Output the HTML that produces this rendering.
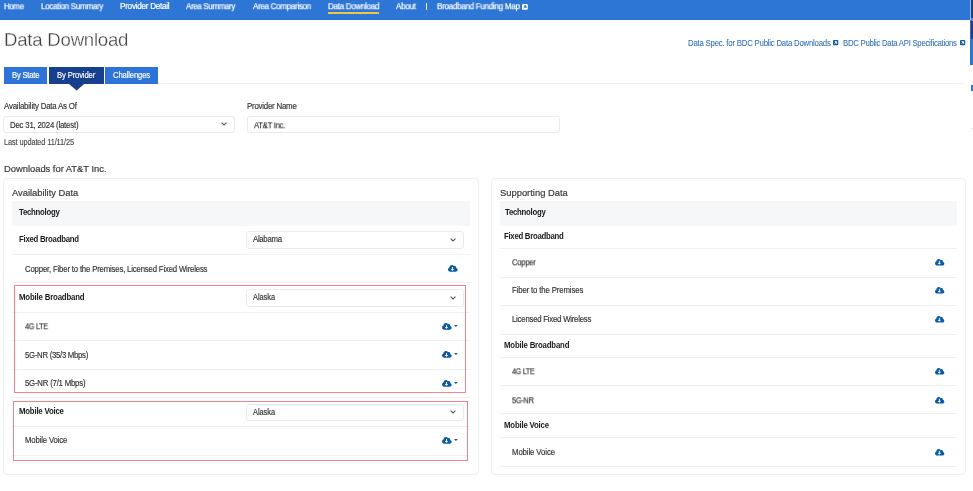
<!DOCTYPE html>
<html><head><meta charset="utf-8"><title>Data Download</title><style>
html,body{margin:0;padding:0;background:#fff;width:973px;height:491px;overflow:hidden;position:relative}
.t{position:absolute;white-space:nowrap;font-family:"Liberation Sans",sans-serif;will-change:transform}
.r{position:absolute}
svg{overflow:visible}
#wrap{position:absolute;left:0;top:0;width:973px;height:491px;overflow:hidden;background:#fff;}
</style></head><body><div id="wrap">
<div class="r" style="left:0px;top:0px;width:973px;height:20px;background:#2d76d6"></div>
<div class="r" style="left:0px;top:18px;width:973px;height:1px;background:#2a72d5"></div>
<div class="t" style="left:3.80px;top:3px;font-size:8.2px;line-height:8.2px;color:#fff;font-weight:normal;letter-spacing:-0.300px;transform-origin:0 6.0px;transform:scale(0.9573,1.1);-webkit-text-stroke:0.2px #fff">Home</div>
<div class="t" style="left:40.70px;top:3px;font-size:8.2px;line-height:8.2px;color:#fff;font-weight:normal;letter-spacing:-0.300px;transform-origin:0 6.0px;transform:scale(0.9752,1.1);-webkit-text-stroke:0.2px #fff">Location Summary</div>
<div class="t" style="left:119.90px;top:3px;font-size:8.2px;line-height:8.2px;color:#fff;font-weight:normal;letter-spacing:-0.286px;transform-origin:0 6.0px;transform:scale(1.0000,1.1);-webkit-text-stroke:0.2px #fff">Provider Detail</div>
<div class="t" style="left:186.30px;top:3px;font-size:8.2px;line-height:8.2px;color:#fff;font-weight:normal;letter-spacing:-0.300px;transform-origin:0 6.0px;transform:scale(0.9613,1.1);-webkit-text-stroke:0.2px #fff">Area Summary</div>
<div class="t" style="left:252.50px;top:3px;font-size:8.2px;line-height:8.2px;color:#fff;font-weight:normal;letter-spacing:-0.300px;transform-origin:0 6.0px;transform:scale(0.9766,1.1);-webkit-text-stroke:0.2px #fff">Area Comparison</div>
<div class="t" style="left:327.70px;top:3px;font-size:8.2px;line-height:8.2px;color:#fff;font-weight:normal;letter-spacing:-0.300px;transform-origin:0 6.0px;transform:scale(0.9847,1.1);-webkit-text-stroke:0.2px #fff">Data Download</div>
<div class="t" style="left:395.60px;top:3px;font-size:8.2px;line-height:8.2px;color:#fff;font-weight:normal;letter-spacing:-0.300px;transform-origin:0 6.0px;transform:scale(0.9760,1.1);-webkit-text-stroke:0.2px #fff">About</div>
<div class="t" style="left:437.00px;top:3px;font-size:8.2px;line-height:8.2px;color:#fff;font-weight:normal;letter-spacing:-0.300px;transform-origin:0 6.0px;transform:scale(0.9869,1.1);-webkit-text-stroke:0.2px #fff">Broadband Funding Map</div>
<div class="r" style="left:426px;top:3px;width:1px;height:7px;background:#e6eefa"></div>
<div class="r" style="left:328px;top:12px;width:51px;height:2px;background:#eec645"></div>
<svg viewBox="0 0 10 10" width="5.8" height="5.8" style="position:absolute;left:522.2px;top:3.6px"><rect x="0" y="0" width="10" height="10" rx="2" fill="#fff"/><path d="M3.6 3.2H7V6.6Z M3 7.2L5.6 4.6" stroke="#2d76d6" stroke-width="1.6" fill="#2d76d6"/></svg>
<div class="r" style="left:970px;top:0px;width:1px;height:20px;background:#9cbde9"></div>
<div class="r" style="left:971px;top:0px;width:2px;height:39px;background:#173f8e"></div>
<div class="r" style="left:971px;top:18px;width:2px;height:3px;background:#6f86b4"></div>
<div class="r" style="left:970px;top:20px;width:1px;height:19px;background:#4a67a6"></div>
<div class="r" style="left:970px;top:39px;width:3px;height:26px;background:#2d76d6"></div>
<div class="r" style="left:971px;top:85px;width:2px;height:6px;background:#2d76d6"></div>
<div class="r" style="left:970px;top:128px;width:3px;height:1px;background:#eeeeee"></div>
<div class="t" style="left:4.00px;top:31px;font-size:18.6px;line-height:18.6px;color:#3e3e3e;font-weight:normal;letter-spacing:-0.225px;-webkit-text-stroke:0.3px #fff">Data Download</div>
<div class="t" style="left:688.20px;top:40px;font-size:7.8px;line-height:7.8px;color:#2f6fb3;font-weight:normal;letter-spacing:-0.215px;transform-origin:0 6.0px;transform:scale(1.0000,1.1);-webkit-text-stroke:0.05px #2f6fb3;">Data Spec. for BDC Public Data Downloads</div>
<svg viewBox="0 0 10 10" width="5.3" height="5.3" style="position:absolute;left:833.3px;top:40.3px"><rect x="0" y="0" width="10" height="10" rx="2" fill="#0f5aa0"/><path d="M3.6 3.2H7V6.6Z M3 7.2L5.6 4.6" stroke="#fff" stroke-width="1.6" fill="#fff"/></svg>
<div class="t" style="left:843.20px;top:40px;font-size:7.8px;line-height:7.8px;color:#2f6fb3;font-weight:normal;letter-spacing:-0.276px;transform-origin:0 6.0px;transform:scale(1.0000,1.1);-webkit-text-stroke:0.05px #2f6fb3;">BDC Public Data API Specifications</div>
<svg viewBox="0 0 10 10" width="5.3" height="5.3" style="position:absolute;left:959.9px;top:40.3px"><rect x="0" y="0" width="10" height="10" rx="2" fill="#0f5aa0"/><path d="M3.6 3.2H7V6.6Z M3 7.2L5.6 4.6" stroke="#fff" stroke-width="1.6" fill="#fff"/></svg>
<div class="r" style="left:158px;top:83px;width:807px;height:1px;background:#eeeff1"></div>
<div class="r" style="left:4px;top:67px;width:43px;height:17px;background:#2e74d8"></div>
<div class="r" style="left:49px;top:67px;width:55px;height:17px;background:#163f8f"></div>
<div class="r" style="left:105px;top:67px;width:53px;height:17px;background:#2e74d8"></div>
<svg width="16" height="8" style="position:absolute;left:69px;top:84px"><path d="M0 0H15.2L7.6 6.6Z" fill="#163f8f"/></svg>
<div class="t" style="left:11.90px;top:72px;font-size:7.7px;line-height:7.7px;color:#fff;font-weight:normal;letter-spacing:-0.229px;transform-origin:0 6.0px;transform:scale(1.0000,1.1);-webkit-text-stroke:0.15px #fff">By State</div>
<div class="t" style="left:56.80px;top:72px;font-size:7.7px;line-height:7.7px;color:#fff;font-weight:normal;letter-spacing:-0.150px;transform-origin:0 6.0px;transform:scale(1.0000,1.1);-webkit-text-stroke:0.15px #fff">By Provider</div>
<div class="t" style="left:113.30px;top:72px;font-size:7.7px;line-height:7.7px;color:#fff;font-weight:normal;letter-spacing:-0.144px;transform-origin:0 6.0px;transform:scale(1.0000,1.1);-webkit-text-stroke:0.15px #fff">Challenges</div>
<div class="t" style="left:3.60px;top:103px;font-size:7.9px;line-height:7.9px;color:#333333;font-weight:normal;letter-spacing:-0.205px;transform-origin:0 6.0px;transform:scale(1.0000,1.1);-webkit-text-stroke:0.15px #333333;">Availability Data As Of</div>
<div class="t" style="left:247.40px;top:103px;font-size:7.9px;line-height:7.9px;color:#333333;font-weight:normal;letter-spacing:-0.233px;transform-origin:0 6.0px;transform:scale(1.0000,1.1);-webkit-text-stroke:0.15px #333333;">Provider Name</div>
<div class="r" style="left:3px;top:116px;width:232px;height:17px;border:1px solid #e9ebee;border-radius:3px;background:#fff;box-sizing:border-box"></div>
<svg width="7" height="4" style="position:absolute;left:221.3px;top:122.0px"><path d="M0.6 0.7 L3.05 3.0 L5.5 0.7" fill="none" stroke="#555555" stroke-width="1.05"/></svg>
<div class="t" style="left:10.30px;top:122px;font-size:7.8px;line-height:7.8px;color:#333333;font-weight:normal;letter-spacing:-0.195px;transform-origin:0 6.0px;transform:scale(1.0000,1.1);-webkit-text-stroke:0.15px #333333;">Dec 31, 2024 (latest)</div>
<div class="r" style="left:247px;top:116px;width:313px;height:17px;border:1px solid #e9ebee;border-radius:3px;background:#fff;box-sizing:border-box"></div>
<div class="t" style="left:253.90px;top:122px;font-size:7.8px;line-height:7.8px;color:#333333;font-weight:normal;letter-spacing:-0.300px;transform-origin:0 6.0px;transform:scale(0.9905,1.1);-webkit-text-stroke:0.15px #333333;">AT&amp;T Inc.</div>
<div class="t" style="left:3.60px;top:139px;font-size:7.4px;line-height:7.4px;color:#444444;font-weight:normal;letter-spacing:-0.120px;transform-origin:0 6.0px;transform:scale(1.0000,1.1);-webkit-text-stroke:0.1px #444444;">Last updated 11/11/25</div>
<div class="t" style="left:4.30px;top:164px;font-size:9.4px;line-height:9.4px;color:#3a3a3a;font-weight:normal;letter-spacing:-0.014px;-webkit-text-stroke:0.2px #3a3a3a;">Downloads for AT&amp;T Inc.</div>
<div class="r" style="left:3px;top:178px;width:476px;height:297px;border:1px solid #eef0f2;border-radius:4px;background:#fff;box-sizing:border-box"></div>
<div class="t" style="left:12.30px;top:188px;font-size:9.4px;line-height:9.4px;color:#3a3a3a;font-weight:normal;letter-spacing:-0.019px;-webkit-text-stroke:0.2px #3a3a3a;">Availability Data</div>
<div class="r" style="left:12px;top:201px;width:458px;height:25px;background:#f6f7f9"></div>
<div class="t" style="left:18.50px;top:209px;font-size:7.8px;line-height:7.8px;color:#1a1a1a;font-weight:bold;letter-spacing:-0.267px;transform-origin:0 6.0px;transform:scale(1.0000,1.1);">Technology</div>
<div class="t" style="left:18.60px;top:236px;font-size:7.8px;line-height:7.8px;color:#1a1a1a;font-weight:bold;letter-spacing:-0.264px;transform-origin:0 6.0px;transform:scale(1.0000,1.1);">Fixed Broadband</div>
<div class="r" style="left:246px;top:231px;width:218px;height:18px;border:1px solid #e9ebee;border-radius:3px;background:#fff;box-sizing:border-box"></div>
<svg width="7" height="4" style="position:absolute;left:450.3px;top:237.5px"><path d="M0.6 0.7 L3.05 3.0 L5.5 0.7" fill="none" stroke="#555555" stroke-width="1.05"/></svg>
<div class="t" style="left:253.40px;top:236px;font-size:7.8px;line-height:7.8px;color:#333333;font-weight:normal;letter-spacing:-0.300px;transform-origin:0 6.0px;transform:scale(1.0000,1.1);-webkit-text-stroke:0.15px #333333;">Alabama</div>
<div class="r" style="left:12px;top:254px;width:458px;height:1px;background:#eef0f2"></div>
<div class="t" style="left:25.10px;top:266px;font-size:7.8px;line-height:7.8px;color:#333333;font-weight:normal;letter-spacing:-0.187px;transform-origin:0 6.0px;transform:scale(1.0000,1.1);-webkit-text-stroke:0.15px #333333;">Copper, Fiber to the Premises, Licensed Fixed Wireless</div>
<svg viewBox="0 32 640 448" width="9.7" height="6.8" style="position:absolute;left:448.2px;top:265.2px"><path fill="#0c5aa6" d="M537.6 226.6c4.1-10.7 6.4-22.4 6.4-34.6 0-53-43-96-96-96-19.7 0-38.1 6-53.3 16.2C367 64.2 315.3 32 256 32c-88.4 0-160 71.6-160 160 0 2.7.1 5.4.2 8.1C40.2 219.8 0 273.2 0 336c0 79.5 64.5 144 144 144h368c70.7 0 128-57.3 128-128 0-61.9-44-113.6-102.4-125.4z"/><path fill="#fff" d="M397.7 319.6L305 412.3c-4.7 4.7-12.3 4.7-17 0l-92.7-92.7c-7.6-7.6-2.2-20.5 8.5-20.5H264V176c0-8.8 7.2-16 16-16h32c8.8 0 16 7.2 16 16v122.6h61.2c10.7 0 16.1 12.9 8.5 20.5z"/></svg>
<div class="r" style="left:12px;top:282px;width:458px;height:1px;background:#eef0f2"></div>
<div class="t" style="left:18.60px;top:294px;font-size:7.8px;line-height:7.8px;color:#1a1a1a;font-weight:bold;letter-spacing:-0.160px;transform-origin:0 6.0px;transform:scale(1.0000,1.1);">Mobile Broadband</div>
<div class="r" style="left:246px;top:289px;width:218px;height:18px;border:1px solid #e9ebee;border-radius:3px;background:#fff;box-sizing:border-box"></div>
<svg width="7" height="4" style="position:absolute;left:450.3px;top:295.5px"><path d="M0.6 0.7 L3.05 3.0 L5.5 0.7" fill="none" stroke="#555555" stroke-width="1.05"/></svg>
<div class="t" style="left:253.10px;top:294px;font-size:7.4px;line-height:7.4px;color:#333333;font-weight:normal;letter-spacing:-0.030px;transform-origin:0 6.0px;transform:scale(1.0000,1.1);-webkit-text-stroke:0.15px #333333;">Alaska</div>
<div class="r" style="left:12px;top:312px;width:458px;height:1px;background:#eef0f2"></div>
<div class="t" style="left:24.70px;top:323px;font-size:7.8px;line-height:7.8px;color:#333333;font-weight:normal;letter-spacing:-0.300px;transform-origin:0 6.0px;transform:scale(0.9347,1.1);-webkit-text-stroke:0.15px #333333;">4G LTE</div>
<svg viewBox="0 32 640 448" width="9.7" height="6.8" style="position:absolute;left:442.4px;top:323.0px"><path fill="#0c5aa6" d="M537.6 226.6c4.1-10.7 6.4-22.4 6.4-34.6 0-53-43-96-96-96-19.7 0-38.1 6-53.3 16.2C367 64.2 315.3 32 256 32c-88.4 0-160 71.6-160 160 0 2.7.1 5.4.2 8.1C40.2 219.8 0 273.2 0 336c0 79.5 64.5 144 144 144h368c70.7 0 128-57.3 128-128 0-61.9-44-113.6-102.4-125.4z"/><path fill="#fff" d="M397.7 319.6L305 412.3c-4.7 4.7-12.3 4.7-17 0l-92.7-92.7c-7.6-7.6-2.2-20.5 8.5-20.5H264V176c0-8.8 7.2-16 16-16h32c8.8 0 16 7.2 16 16v122.6h61.2c10.7 0 16.1 12.9 8.5 20.5z"/></svg>
<svg width="4" height="3" style="position:absolute;left:453.6px;top:325.0px"><path d="M0 0H3.8L1.9 2Z" fill="#0c5aa6"/></svg>
<div class="r" style="left:12px;top:340px;width:458px;height:1px;background:#eef0f2"></div>
<div class="t" style="left:24.70px;top:352px;font-size:7.8px;line-height:7.8px;color:#333333;font-weight:normal;letter-spacing:-0.294px;transform-origin:0 6.0px;transform:scale(1.0000,1.1);-webkit-text-stroke:0.15px #333333;">5G-NR (35/3 Mbps)</div>
<svg viewBox="0 32 640 448" width="9.7" height="6.8" style="position:absolute;left:442.4px;top:351.3px"><path fill="#0c5aa6" d="M537.6 226.6c4.1-10.7 6.4-22.4 6.4-34.6 0-53-43-96-96-96-19.7 0-38.1 6-53.3 16.2C367 64.2 315.3 32 256 32c-88.4 0-160 71.6-160 160 0 2.7.1 5.4.2 8.1C40.2 219.8 0 273.2 0 336c0 79.5 64.5 144 144 144h368c70.7 0 128-57.3 128-128 0-61.9-44-113.6-102.4-125.4z"/><path fill="#fff" d="M397.7 319.6L305 412.3c-4.7 4.7-12.3 4.7-17 0l-92.7-92.7c-7.6-7.6-2.2-20.5 8.5-20.5H264V176c0-8.8 7.2-16 16-16h32c8.8 0 16 7.2 16 16v122.6h61.2c10.7 0 16.1 12.9 8.5 20.5z"/></svg>
<svg width="4" height="3" style="position:absolute;left:453.6px;top:353.3px"><path d="M0 0H3.8L1.9 2Z" fill="#0c5aa6"/></svg>
<div class="r" style="left:12px;top:369px;width:458px;height:1px;background:#eef0f2"></div>
<div class="t" style="left:24.70px;top:380px;font-size:7.8px;line-height:7.8px;color:#333333;font-weight:normal;letter-spacing:-0.213px;transform-origin:0 6.0px;transform:scale(1.0000,1.1);-webkit-text-stroke:0.15px #333333;">5G-NR (7/1 Mbps)</div>
<svg viewBox="0 32 640 448" width="9.7" height="6.8" style="position:absolute;left:442.4px;top:380.0px"><path fill="#0c5aa6" d="M537.6 226.6c4.1-10.7 6.4-22.4 6.4-34.6 0-53-43-96-96-96-19.7 0-38.1 6-53.3 16.2C367 64.2 315.3 32 256 32c-88.4 0-160 71.6-160 160 0 2.7.1 5.4.2 8.1C40.2 219.8 0 273.2 0 336c0 79.5 64.5 144 144 144h368c70.7 0 128-57.3 128-128 0-61.9-44-113.6-102.4-125.4z"/><path fill="#fff" d="M397.7 319.6L305 412.3c-4.7 4.7-12.3 4.7-17 0l-92.7-92.7c-7.6-7.6-2.2-20.5 8.5-20.5H264V176c0-8.8 7.2-16 16-16h32c8.8 0 16 7.2 16 16v122.6h61.2c10.7 0 16.1 12.9 8.5 20.5z"/></svg>
<svg width="4" height="3" style="position:absolute;left:453.6px;top:382.0px"><path d="M0 0H3.8L1.9 2Z" fill="#0c5aa6"/></svg>
<div class="r" style="left:12px;top:397px;width:458px;height:1px;background:#eef0f2"></div>
<div class="t" style="left:18.60px;top:408px;font-size:7.8px;line-height:7.8px;color:#1a1a1a;font-weight:bold;letter-spacing:-0.200px;transform-origin:0 6.0px;transform:scale(1.0000,1.1);">Mobile Voice</div>
<div class="r" style="left:246px;top:404px;width:218px;height:17px;border:1px solid #e9ebee;border-radius:3px;background:#fff;box-sizing:border-box"></div>
<svg width="7" height="4" style="position:absolute;left:450.3px;top:410.0px"><path d="M0.6 0.7 L3.05 3.0 L5.5 0.7" fill="none" stroke="#555555" stroke-width="1.05"/></svg>
<div class="t" style="left:253.10px;top:409px;font-size:7.4px;line-height:7.4px;color:#333333;font-weight:normal;letter-spacing:-0.030px;transform-origin:0 6.0px;transform:scale(1.0000,1.1);-webkit-text-stroke:0.15px #333333;">Alaska</div>
<div class="r" style="left:12px;top:426px;width:458px;height:1px;background:#eef0f2"></div>
<div class="t" style="left:25.10px;top:437px;font-size:7.8px;line-height:7.8px;color:#333333;font-weight:normal;letter-spacing:-0.173px;transform-origin:0 6.0px;transform:scale(1.0000,1.1);-webkit-text-stroke:0.15px #333333;">Mobile Voice</div>
<svg viewBox="0 32 640 448" width="9.7" height="6.8" style="position:absolute;left:442.4px;top:436.6px"><path fill="#0c5aa6" d="M537.6 226.6c4.1-10.7 6.4-22.4 6.4-34.6 0-53-43-96-96-96-19.7 0-38.1 6-53.3 16.2C367 64.2 315.3 32 256 32c-88.4 0-160 71.6-160 160 0 2.7.1 5.4.2 8.1C40.2 219.8 0 273.2 0 336c0 79.5 64.5 144 144 144h368c70.7 0 128-57.3 128-128 0-61.9-44-113.6-102.4-125.4z"/><path fill="#fff" d="M397.7 319.6L305 412.3c-4.7 4.7-12.3 4.7-17 0l-92.7-92.7c-7.6-7.6-2.2-20.5 8.5-20.5H264V176c0-8.8 7.2-16 16-16h32c8.8 0 16 7.2 16 16v122.6h61.2c10.7 0 16.1 12.9 8.5 20.5z"/></svg>
<svg width="4" height="3" style="position:absolute;left:453.6px;top:438.6px"><path d="M0 0H3.8L1.9 2Z" fill="#0c5aa6"/></svg>
<div class="r" style="left:12px;top:455px;width:458px;height:1px;background:#eef0f2"></div>
<div class="r" style="left:14px;top:285px;width:452px;height:108px;border:1px solid #f3838a;box-sizing:border-box"></div>
<div class="r" style="left:13px;top:401px;width:455px;height:60px;border:1px solid #f3838a;box-sizing:border-box"></div>
<div class="r" style="left:491px;top:178px;width:475px;height:297px;border:1px solid #eef0f2;border-radius:4px;background:#fff;box-sizing:border-box"></div>
<div class="t" style="left:499.80px;top:188px;font-size:9.4px;line-height:9.4px;color:#3a3a3a;font-weight:normal;letter-spacing:-0.000px;-webkit-text-stroke:0.2px #3a3a3a;">Supporting Data</div>
<div class="r" style="left:500px;top:201px;width:457px;height:25px;background:#f6f7f9"></div>
<div class="t" style="left:505.20px;top:209px;font-size:7.8px;line-height:7.8px;color:#1a1a1a;font-weight:bold;letter-spacing:-0.256px;transform-origin:0 6.0px;transform:scale(1.0000,1.1);">Technology</div>
<div class="t" style="left:503.60px;top:233px;font-size:7.8px;line-height:7.8px;color:#1a1a1a;font-weight:bold;letter-spacing:-0.286px;transform-origin:0 6.0px;transform:scale(1.0000,1.1);">Fixed Broadband</div>
<div class="r" style="left:500px;top:248px;width:457px;height:1px;background:#eef0f2"></div>
<div class="t" style="left:511.60px;top:259px;font-size:7.8px;line-height:7.8px;color:#333333;font-weight:normal;letter-spacing:-0.300px;transform-origin:0 6.0px;transform:scale(0.9837,1.1);-webkit-text-stroke:0.15px #333333;">Copper</div>
<svg viewBox="0 32 640 448" width="9.3" height="6.5" style="position:absolute;left:935.4px;top:259.4px"><path fill="#0c5aa6" d="M537.6 226.6c4.1-10.7 6.4-22.4 6.4-34.6 0-53-43-96-96-96-19.7 0-38.1 6-53.3 16.2C367 64.2 315.3 32 256 32c-88.4 0-160 71.6-160 160 0 2.7.1 5.4.2 8.1C40.2 219.8 0 273.2 0 336c0 79.5 64.5 144 144 144h368c70.7 0 128-57.3 128-128 0-61.9-44-113.6-102.4-125.4z"/><path fill="#fff" d="M397.7 319.6L305 412.3c-4.7 4.7-12.3 4.7-17 0l-92.7-92.7c-7.6-7.6-2.2-20.5 8.5-20.5H264V176c0-8.8 7.2-16 16-16h32c8.8 0 16 7.2 16 16v122.6h61.2c10.7 0 16.1 12.9 8.5 20.5z"/></svg>
<div class="r" style="left:500px;top:277px;width:457px;height:1px;background:#eef0f2"></div>
<div class="t" style="left:511.60px;top:287px;font-size:7.8px;line-height:7.8px;color:#333333;font-weight:normal;letter-spacing:-0.140px;transform-origin:0 6.0px;transform:scale(1.0000,1.1);-webkit-text-stroke:0.15px #333333;">Fiber to the Premises</div>
<svg viewBox="0 32 640 448" width="9.3" height="6.5" style="position:absolute;left:935.4px;top:287.2px"><path fill="#0c5aa6" d="M537.6 226.6c4.1-10.7 6.4-22.4 6.4-34.6 0-53-43-96-96-96-19.7 0-38.1 6-53.3 16.2C367 64.2 315.3 32 256 32c-88.4 0-160 71.6-160 160 0 2.7.1 5.4.2 8.1C40.2 219.8 0 273.2 0 336c0 79.5 64.5 144 144 144h368c70.7 0 128-57.3 128-128 0-61.9-44-113.6-102.4-125.4z"/><path fill="#fff" d="M397.7 319.6L305 412.3c-4.7 4.7-12.3 4.7-17 0l-92.7-92.7c-7.6-7.6-2.2-20.5 8.5-20.5H264V176c0-8.8 7.2-16 16-16h32c8.8 0 16 7.2 16 16v122.6h61.2c10.7 0 16.1 12.9 8.5 20.5z"/></svg>
<div class="r" style="left:500px;top:305px;width:457px;height:1px;background:#eef0f2"></div>
<div class="t" style="left:511.80px;top:316px;font-size:7.8px;line-height:7.8px;color:#333333;font-weight:normal;letter-spacing:-0.232px;transform-origin:0 6.0px;transform:scale(1.0000,1.1);-webkit-text-stroke:0.15px #333333;">Licensed Fixed Wireless</div>
<svg viewBox="0 32 640 448" width="9.3" height="6.5" style="position:absolute;left:935.4px;top:316.2px"><path fill="#0c5aa6" d="M537.6 226.6c4.1-10.7 6.4-22.4 6.4-34.6 0-53-43-96-96-96-19.7 0-38.1 6-53.3 16.2C367 64.2 315.3 32 256 32c-88.4 0-160 71.6-160 160 0 2.7.1 5.4.2 8.1C40.2 219.8 0 273.2 0 336c0 79.5 64.5 144 144 144h368c70.7 0 128-57.3 128-128 0-61.9-44-113.6-102.4-125.4z"/><path fill="#fff" d="M397.7 319.6L305 412.3c-4.7 4.7-12.3 4.7-17 0l-92.7-92.7c-7.6-7.6-2.2-20.5 8.5-20.5H264V176c0-8.8 7.2-16 16-16h32c8.8 0 16 7.2 16 16v122.6h61.2c10.7 0 16.1 12.9 8.5 20.5z"/></svg>
<div class="r" style="left:500px;top:334px;width:457px;height:1px;background:#eef0f2"></div>
<div class="t" style="left:503.90px;top:342px;font-size:7.8px;line-height:7.8px;color:#1a1a1a;font-weight:bold;letter-spacing:-0.173px;transform-origin:0 6.0px;transform:scale(1.0000,1.1);">Mobile Broadband</div>
<div class="r" style="left:500px;top:357px;width:457px;height:1px;background:#eef0f2"></div>
<div class="t" style="left:512.00px;top:368px;font-size:7.8px;line-height:7.8px;color:#333333;font-weight:normal;letter-spacing:-0.300px;transform-origin:0 6.0px;transform:scale(0.9143,1.1);-webkit-text-stroke:0.15px #333333;">4G LTE</div>
<svg viewBox="0 32 640 448" width="9.3" height="6.5" style="position:absolute;left:935.4px;top:368.0px"><path fill="#0c5aa6" d="M537.6 226.6c4.1-10.7 6.4-22.4 6.4-34.6 0-53-43-96-96-96-19.7 0-38.1 6-53.3 16.2C367 64.2 315.3 32 256 32c-88.4 0-160 71.6-160 160 0 2.7.1 5.4.2 8.1C40.2 219.8 0 273.2 0 336c0 79.5 64.5 144 144 144h368c70.7 0 128-57.3 128-128 0-61.9-44-113.6-102.4-125.4z"/><path fill="#fff" d="M397.7 319.6L305 412.3c-4.7 4.7-12.3 4.7-17 0l-92.7-92.7c-7.6-7.6-2.2-20.5 8.5-20.5H264V176c0-8.8 7.2-16 16-16h32c8.8 0 16 7.2 16 16v122.6h61.2c10.7 0 16.1 12.9 8.5 20.5z"/></svg>
<div class="r" style="left:500px;top:385px;width:457px;height:1px;background:#eef0f2"></div>
<div class="t" style="left:512.00px;top:397px;font-size:7.8px;line-height:7.8px;color:#333333;font-weight:normal;letter-spacing:-0.300px;transform-origin:0 6.0px;transform:scale(0.9518,1.1);-webkit-text-stroke:0.15px #333333;">5G-NR</div>
<svg viewBox="0 32 640 448" width="9.3" height="6.5" style="position:absolute;left:935.4px;top:397.0px"><path fill="#0c5aa6" d="M537.6 226.6c4.1-10.7 6.4-22.4 6.4-34.6 0-53-43-96-96-96-19.7 0-38.1 6-53.3 16.2C367 64.2 315.3 32 256 32c-88.4 0-160 71.6-160 160 0 2.7.1 5.4.2 8.1C40.2 219.8 0 273.2 0 336c0 79.5 64.5 144 144 144h368c70.7 0 128-57.3 128-128 0-61.9-44-113.6-102.4-125.4z"/><path fill="#fff" d="M397.7 319.6L305 412.3c-4.7 4.7-12.3 4.7-17 0l-92.7-92.7c-7.6-7.6-2.2-20.5 8.5-20.5H264V176c0-8.8 7.2-16 16-16h32c8.8 0 16 7.2 16 16v122.6h61.2c10.7 0 16.1 12.9 8.5 20.5z"/></svg>
<div class="r" style="left:500px;top:413px;width:457px;height:1px;background:#eef0f2"></div>
<div class="t" style="left:503.90px;top:422px;font-size:7.8px;line-height:7.8px;color:#1a1a1a;font-weight:bold;letter-spacing:-0.182px;transform-origin:0 6.0px;transform:scale(1.0000,1.1);">Mobile Voice</div>
<div class="r" style="left:500px;top:437px;width:457px;height:1px;background:#eef0f2"></div>
<div class="t" style="left:512.00px;top:449px;font-size:7.8px;line-height:7.8px;color:#333333;font-weight:normal;letter-spacing:-0.109px;transform-origin:0 6.0px;transform:scale(1.0000,1.1);-webkit-text-stroke:0.15px #333333;">Mobile Voice</div>
<svg viewBox="0 32 640 448" width="9.3" height="6.5" style="position:absolute;left:935.4px;top:449.0px"><path fill="#0c5aa6" d="M537.6 226.6c4.1-10.7 6.4-22.4 6.4-34.6 0-53-43-96-96-96-19.7 0-38.1 6-53.3 16.2C367 64.2 315.3 32 256 32c-88.4 0-160 71.6-160 160 0 2.7.1 5.4.2 8.1C40.2 219.8 0 273.2 0 336c0 79.5 64.5 144 144 144h368c70.7 0 128-57.3 128-128 0-61.9-44-113.6-102.4-125.4z"/><path fill="#fff" d="M397.7 319.6L305 412.3c-4.7 4.7-12.3 4.7-17 0l-92.7-92.7c-7.6-7.6-2.2-20.5 8.5-20.5H264V176c0-8.8 7.2-16 16-16h32c8.8 0 16 7.2 16 16v122.6h61.2c10.7 0 16.1 12.9 8.5 20.5z"/></svg>
<div class="r" style="left:500px;top:466px;width:457px;height:1px;background:#eef0f2"></div>
</div></body></html>
